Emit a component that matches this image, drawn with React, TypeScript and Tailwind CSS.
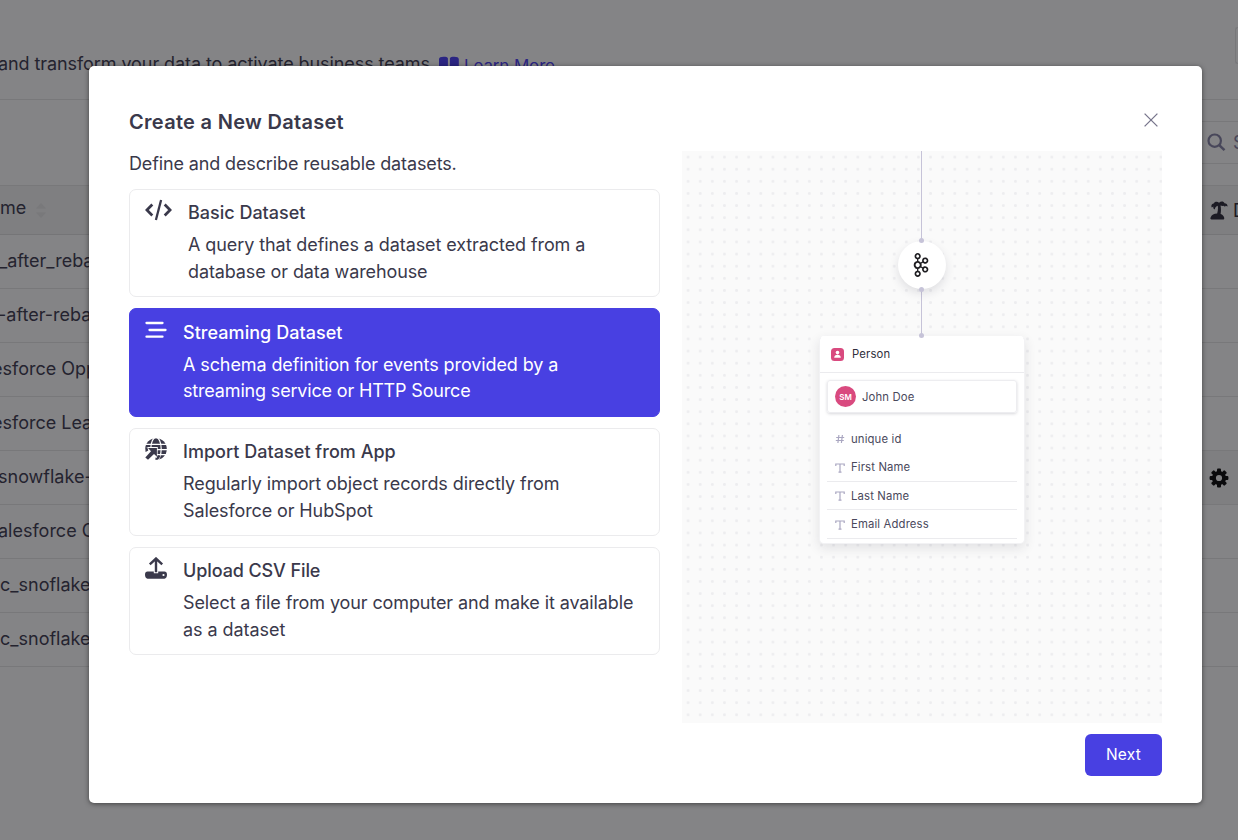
import type { ReactNode } from "react";
import { SiApachekafka } from "react-icons/si";

const ROWS = [
  { text: "_after_rebalance", shift: "-ml-[1px]" },
  { text: "-after-rebalance", shift: "-ml-[2px]" },
  { text: "esforce Opportunity", shift: "-ml-[8px]" },
  { text: "esforce Leads", shift: "-ml-[8px]" },
  { text: "snowflake-import", shift: "-ml-[2px]", gear: true },
  { text: "alesforce Contacts", shift: "-ml-[2px]" },
  { text: "c_snoflake_one", shift: "ml-0" },
  { text: "c_snoflake_two", shift: "ml-0" },
];

function BookIcon() {
  return (
    <svg width="22" height="20" viewBox="0 0 22 20" fill="currentColor">
      <path d="M1 3.2C1 1.6 3 .8 5.500.8S9.300 1.200 9.900 2.200V17C8.700 15.900 7 15.500 5.200 15.500S2 16 1 17Z" />
      <path d="M20.800 3.200C20.800 1.600 18.800.8 16.300.8S12.500 1.200 11.900 2.200V17C13.100 15.900 14.800 15.500 16.600 15.500S19.800 16 20.800 17Z" />
    </svg>
  );
}

function PalmIcon() {
  return (
    <svg width="18" height="19" viewBox="0 0 18 19" fill="currentColor">
      <path d="M1.500 18.500C.5 18.500.2 17.600.5 16.700 1.500 14 4 12.600 7.200 12.600 8 9.500 8.200 7 7.700 4.800 6.300 5.200 5 6.500 4.800 8.500 3.300 8 3 6.700 3.500 5.500L1.800 6.400C.6 4.400 2 2.700 3.700 2.500 4.500.5 7.500.1 9 1.800 11-.1 13.800.3 14.500 2.200 16.500 2.200 17.700 3.500 17.500 5.400L15.700 4.800 15 5.700 13.500 4.700 12.500 5 10.500 4.600C11.100 7 11.100 9.700 10.600 12.900 12.500 13.500 13.800 15 14.200 16.700 14.400 17.600 14 18.500 13 18.500Z" />
    </svg>
  );
}

function GearIcon() {
  return (
    <svg width="20" height="20" viewBox="-10 -10 20 20">
      <circle r="5.100" fill="none" stroke="currentColor" strokeWidth="4" />
      {[0, 45, 90, 135].map((a) => (
        <g key={a} transform={`rotate(${a})`} fill="currentColor">
          <rect x="-2" y="-9.400" width="4" height="4.200" rx="1" />
          <rect x="-2" y="5.200" width="4" height="4.200" rx="1" />
        </g>
      ))}
    </svg>
  );
}

function SearchIcon() {
  return (
    <svg width="19" height="19" viewBox="0 0 19 19" fill="none" stroke="currentColor" strokeWidth="2.200" className="shrink-0">
      <circle cx="7.700" cy="7.700" r="6.200" />
      <path d="m12.200 12.200 5.300 5" strokeWidth="2.500" />
    </svg>
  );
}

function CodeIcon() {
  return (
    <svg width="27" height="22" viewBox="0 0 27 22" fill="none" stroke="currentColor" strokeWidth="2.700">
      <path d="M7.300 5.500 1.900 11l5.400 5.500M19.700 5.500l5.400 5.500-5.400 5.500" strokeLinejoin="miter" />
      <path d="M16.100 1 10.900 21" strokeWidth="2.300" />
    </svg>
  );
}

function StreamIcon() {
  return (
    <svg width="22" height="22" viewBox="0 0 22 22" stroke="currentColor" strokeWidth="2.300" strokeLinecap="round">
      <path d="M1.500 5h16M4.500 12h16M1.500 18.700h16" />
    </svg>
  );
}

function GlobeArrowIcon() {
  return (
    <svg width="22" height="22" viewBox="0 0 22 22">
      <circle cx="11" cy="11" r="10.800" fill="currentColor" />
      <g fill="none" stroke="#fff" strokeWidth="1.200">
        <ellipse cx="11" cy="11" rx="5.200" ry="11.500" />
        <path d="M0 6.300h22M11 11.700h11M10 16.700h12M11 11v11" />
      </g>
      <path d="M-1 9.200h3.500L3 9h9.800l-.3 9-3 4.500H-1Z" fill="#fff" />
      <path d="M3 10.100h8.900v8.700L9 15.900 3 21.800.3 19.400 6 13.200Z" fill="currentColor" />
      <path d="M.2 9.200H2.200L3.300 12.600.6 14Z" fill="currentColor" />
      <path d="M10.500 21.700V19.500L12.600 20.500V17.500h2.900c-.7 2.300-1.700 3.700-3.200 4.200Z" fill="currentColor" />
    </svg>
  );
}

function UploadIcon() {
  return (
    <svg width="22" height="22" viewBox="0 0 22 22">
      <path d="M2.500 14.600h6.300v1.700h4.400v-1.700h6.300c1.500 0 2.500 1.200 2.500 3.200s-1 3.900-2.500 3.900h-17C1 21.700 0 19.900 0 17.800s1-3.200 2.500-3.200Z" fill="currentColor" />
      <circle cx="18.500" cy="18" r="1.100" fill="#fff" />
      <path d="M11 15.200V1.800M4.800 7.300 11 1.500l6.200 5.800" fill="none" stroke="currentColor" strokeWidth="2.400" />
    </svg>
  );
}

type CardProps = { icon: ReactNode; title: string; titleTracking: string; lines: [string, string]; tracking: [string, string]; active?: boolean };

function OptionCard({ icon, title, titleTracking, lines, tracking, active }: CardProps) {
  return (
    <button
      className={
        active
          ? "flex h-[108.500px] w-full items-start gap-4 rounded-[7px] border border-[#4840e2] bg-[#4840e2] px-[15px] pt-[9px] text-left text-white"
          : "flex h-[108px] w-full items-start gap-4 rounded-[7px] border border-[#ebebed] bg-white px-[15px] pt-[9px] text-left text-[#3a394b]"
      }
    >
      <span className="shrink-0">{icon}</span>
      <span className={active ? "block pt-[1px] whitespace-nowrap" : "block whitespace-nowrap"}>
        <span className={"block text-[18px] leading-[27px] font-medium " + titleTracking}>{title}</span>
        <span className={"mt-[6px] block text-[18px] leading-[26.700px] " + tracking[0]}>{lines[0]}</span>
        <span className={(active ? "-mt-[1px] " : "") + "block text-[18px] leading-[26.700px] " + tracking[1]}>{lines[1]}</span>
      </span>
    </button>
  );
}

function TypeMark() {
  return (
    <svg width="10" height="10" viewBox="0 0 10 10" fill="none" stroke="#aaa7c1" strokeWidth="1.200">
      <path d="M.8 3V1h8.400v2M5 1v8M3.500 9.200h3" />
    </svg>
  );
}

function HashMark() {
  return (
    <svg width="10" height="10" viewBox="0 0 10 10" fill="none" stroke="#aaa7c1" strokeWidth="1.200">
      <path d="M3.900 1 2.900 9M7.400 1 6.400 9M1.200 3.500h8M.8 6.500h8" />
    </svg>
  );
}

function Preview() {
  return (
    <div className="flex h-[571.500px] w-[480px] flex-col items-center bg-[#fafafa] bg-[radial-gradient(circle,#ededef_0,#ededef_1.100px,transparent_1.700px)] bg-[length:12.130px_12.130px]">
      <svg width="60" height="90" viewBox="0 0 60 90" className="z-10 block">
        <path d="M29.500 0v90" stroke="#c6c3d8" />
      </svg>
      <div className="relative flex size-12 items-center justify-center rounded-full bg-white shadow-[0_4px_10px_rgba(40,40,60,0.13)]">
        <span className="absolute -top-[3px] left-[21px] size-[5px] rounded-full bg-[#c6c3d8]" />
        <SiApachekafka size={24} color="#1f1e22" className="-ml-[2px]" />
        <span className="absolute -bottom-[3px] left-[21px] size-[5px] rounded-full bg-[#c6c3d8]" />
      </div>
      <svg width="60" height="47" viewBox="0 0 60 47" className="block">
        <path d="M29.500 2v46" stroke="#c6c3d8" />
      </svg>
      <div className="relative h-[208px] w-[206px] rounded-[5px] border border-[#f2f2f4] border-t-white bg-white text-[11.300px] text-[#4a495c] shadow-[0_4px_12px_rgba(40,40,60,0.12)]">
        <span className="absolute -top-[4px] left-[99px] size-[5px] rounded-full bg-[#c6c3d8]" />
        <div className="flex h-[36px] items-center gap-2 border-b border-[#ebebee] pl-[11px] text-[#302f3c]">
          <svg width="13" height="13" viewBox="0 0 13 13">
            <rect width="13" height="13" rx="3.500" fill="#d94a7f" />
            <circle cx="6.500" cy="4.600" r="1.800" fill="#fff" />
            <path d="M3.200 9.800c0-2 1.300-3 3.300-3s3.300 1 3.300 3Z" fill="#fff" />
          </svg>
          <span className="tracking-[0.150px]">Person</span>
        </div>
        <div className="mx-[7px] mt-[7px] flex h-[33px] items-center gap-[6px] rounded-[3px] border border-[#ededf0] pl-[7px] shadow-[0_1px_3px_rgba(40,40,60,0.18)]">
          <span className="flex size-[21px] items-center justify-center rounded-full bg-[#d94a7f] text-[8px] font-semibold text-white">SM</span>
          <span className="pt-[1px] tracking-[0.150px]">John Doe</span>
        </div>
        <div className="mx-[7px] mt-[12px]">
          <div className="flex h-[28.700px] items-center gap-[6px] pl-[8px]"><HashMark /><span className="tracking-[0.150px]">unique id</span></div>
          {["First Name", "Last Name", "Email Address"].map((name) => (
            <div key={name} className="flex h-[28.400px] items-center gap-[6px] border-b border-[#ebebee] pt-[1px] pl-[8px]">
              <TypeMark />
              <span className="tracking-[0.150px]">{name}</span>
            </div>
          ))}
        </div>
      </div>
    </div>
  );
}

function Background() {
  return (
    <div className="h-full whitespace-nowrap bg-[#848486] text-[18px] text-[#24232f]">
      <div className="flex h-[100px] items-start justify-between border-b border-[#78787a] pt-[27px]">
        <div className="flex pt-[23px] leading-[27px]">
          <span className="-ml-[2px] tracking-[-0.080px]">and transform your data to activate business teams.</span>
          <span className="ml-[3px] flex text-[#2b2582]">
            <span className="pt-[6px]"><BookIcon /></span>
            <span className="ml-[4px] pt-[3px] text-[17px] tracking-[-0.150px]">Learn More</span>
          </span>
        </div>
        <div className="h-[37px] w-[3px] rounded-l-[6px] border border-r-0 border-[#78787a]" />
      </div>
      <div className="flex h-[86px] items-start justify-end border-b border-[#78787a] pt-[21px]">
        <div className="flex h-[43px] w-[36px] items-center gap-[7px] overflow-hidden border-y border-[#78787a] pl-[5px] text-[#48475a]">
          <SearchIcon />
          <span>Search</span>
        </div>
      </div>
      <div className="flex h-[49px] items-center justify-between overflow-hidden border-b border-[#757577] bg-[#7f7f81]">
        <div className="flex items-center gap-[10px]">
          <span className="-mt-[5px]">me</span>
          <svg width="10" height="15" viewBox="0 0 10 15" fill="#79797b"><path d="m5 0 5 5.500H0ZM5 15l5-5.500H0Z" /></svg>
        </div>
        <div className="flex w-[28px] items-center gap-[5px] overflow-hidden text-[#1c1b24]">
          <span className="shrink-0"><PalmIcon /></span>
          <span>D</span>
        </div>
      </div>
      {ROWS.map((row, i) => (
        <div key={i} className="flex h-[54px] items-center justify-between overflow-hidden border-b border-[#78787a]">
          <span className={"-mt-[2px] " + row.shift}>{row.text}</span>
          {row.gear && <span className="flex h-full w-[36px] items-center bg-[#7f7f81] pl-[7px] text-[#0b0b0d]"><GearIcon /></span>}
        </div>
      ))}
    </div>
  );
}

export default function App() {
  return (
    <div className="relative h-[840px] w-[1238px] overflow-hidden font-['Inter',sans-serif]">
      <Background />
      <div className="absolute top-[66px] left-[89px] flex h-[737px] w-[1113px] flex-col rounded-[5px] bg-white px-10 text-[#3a394b] shadow-[0_1px_5px_rgba(0,0,0,0.5)]">
        <div className="flex h-[85px] items-start justify-between pt-[42px]">
          <h1 className="text-[20px] leading-[28px] font-semibold tracking-[0.300px]">Create a New Dataset</h1>
          <svg width="14" height="14" viewBox="0 0 14 14" fill="none" stroke="#77758c" strokeWidth="1.300" className="mt-[5px] mr-[4px]">
            <path d="m.6.600 12.800 12.800M13.400.6.600 13.400" />
          </svg>
        </div>
        <div className="flex justify-between">
          <div className="w-[531px]">
            <p className="h-[38.300px] text-[18px] leading-[26px] tracking-[-0.130px]">Define and describe reusable datasets.</p>
            <div className="flex flex-col gap-[11px]">
              <OptionCard icon={<CodeIcon />} title="Basic Dataset" titleTracking="tracking-[-0.010px]" lines={["A query that defines a dataset extracted from a", "database or data warehouse"]} tracking={["tracking-[-0.090px]", "tracking-[-0.110px]"]} />
              <OptionCard active icon={<StreamIcon />} title="Streaming Dataset" titleTracking="tracking-[0.050px]" lines={["A schema definition for events provided by a", "streaming service or HTTP Source"]} tracking={["tracking-[-0.100px]", "tracking-[-0.170px]"]} />
              <OptionCard icon={<GlobeArrowIcon />} title="Import Dataset from App" titleTracking="tracking-[0.030px]" lines={["Regularly import object records directly from", "Salesforce or HubSpot"]} tracking={["tracking-[-0.090px]", "tracking-[-0.110px]"]} />
              <OptionCard icon={<UploadIcon />} title="Upload CSV File" titleTracking="tracking-[-0.100px]" lines={["Select a file from your computer and make it available", "as a dataset"]} tracking={["tracking-[-0.110px]", "tracking-[-0.050px]"]} />
            </div>
          </div>
          <Preview />
        </div>
        <div className="mt-[11.500px] flex justify-end">
          <button className="h-[42px] w-[77px] rounded-[6px] bg-[#4840e2] text-[15.500px] tracking-[0.200px] text-white">Next</button>
        </div>
      </div>
    </div>
  );
}
